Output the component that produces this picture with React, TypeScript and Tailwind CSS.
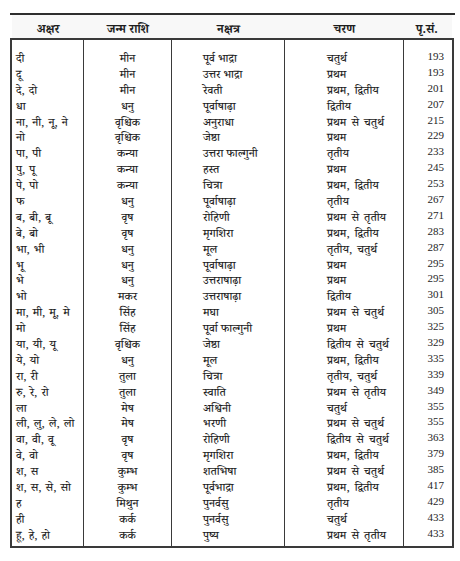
import React from "react";

type Row = [string, string, string, string, string];

const rows: Row[] = [
  ["दी", "मीन", "पूर्व भाद्रा", "चतुर्थ", "193"],
  ["दू", "मीन", "उत्तर भाद्रा", "प्रथम", "193"],
  ["दे, दो", "मीन", "रेवती", "प्रथम, द्वितीय", "201"],
  ["धा", "धनु", "पूर्वाषाढ़ा", "द्वितीय", "207"],
  ["ना, नी, नू, ने", "वृश्चिक", "अनुराधा", "प्रथम से चतुर्थ", "215"],
  ["नो", "वृश्चिक", "जेष्ठा", "प्रथम", "229"],
  ["पा, पी", "कन्या", "उत्तरा फाल्गुनी", "तृतीय", "233"],
  ["पु, पू", "कन्या", "हस्त", "प्रथम", "245"],
  ["पे, पो", "कन्या", "चित्रा", "प्रथम, द्वितीय", "253"],
  ["फ", "धनु", "पूर्वाषाढ़ा", "तृतीय", "267"],
  ["ब, बी, बू", "वृष", "रोहिणी", "प्रथम से तृतीय", "271"],
  ["बे, बो", "वृष", "मृगशिरा", "प्रथम, द्वितीय", "283"],
  ["भा, भी", "धनु", "मूल", "तृतीय, चतुर्थ", "287"],
  ["भू", "धनु", "पूर्वाषाढ़ा", "प्रथम", "295"],
  ["भे", "धनु", "उत्तराषाढ़ा", "प्रथम", "295"],
  ["भो", "मकर", "उत्तराषाढ़ा", "द्वितीय", "301"],
  ["मा, मी, मू, मे", "सिंह", "मघा", "प्रथम से चतुर्थ", "305"],
  ["मो", "सिंह", "पूर्वा फाल्गुनी", "प्रथम", "325"],
  ["या, यी, यू", "वृश्चिक", "जेष्ठा", "द्वितीय से चतुर्थ", "329"],
  ["ये, यो", "धनु", "मूल", "प्रथम, द्वितीय", "335"],
  ["रा, री", "तुला", "चित्रा", "तृतीय, चतुर्थ", "339"],
  ["रु, रे, रो", "तुला", "स्वाति", "प्रथम से तृतीय", "349"],
  ["ला", "मेष", "अश्विनी", "चतुर्थ", "355"],
  ["ली, लु, ले, लो", "मेष", "भरणी", "प्रथम से चतुर्थ", "355"],
  ["वा, वी, वू", "वृष", "रोहिणी", "द्वितीय से चतुर्थ", "363"],
  ["वे, वो", "वृष", "मृगशिरा", "प्रथम, द्वितीय", "379"],
  ["श, स", "कुम्भ", "शतभिषा", "प्रथम से चतुर्थ", "385"],
  ["श, स, से, सो", "कुम्भ", "पूर्वभाद्रा", "प्रथम, द्वितीय", "417"],
  ["ह", "मिथुन", "पुनर्वसु", "तृतीय", "429"],
  ["ही", "कर्क", "पुनर्वसु", "चतुर्थ", "433"],
  ["हू, हे, हो", "कर्क", "पुष्य", "प्रथम से तृतीय", "433"],
];

const font = {
  fontFamily:
    '"Noto Serif Devanagari", "Noto Sans Devanagari", "Lohit Devanagari", "FreeSerif", "Liberation Serif", serif',
};

function Cells({ items }: { items: string[] }) {
  return (
    <>
      {items.map((t, i) => (
        <div key={i} className="h-[15.9px] leading-[15.9px] whitespace-nowrap">
          {t}
        </div>
      ))}
    </>
  );
}

export default function App() {
  const col = (i: number) => rows.map((r) => r[i]);
  return (
    <div
      className="w-[460px] h-[561px] bg-white text-[#1e1e1e] overflow-hidden"
      style={font}
    >
      <div className="pt-[13px]">
        <div className="ml-[10px] w-[445px] h-[2px] bg-[#2e2e2e]" />
        <div className="ml-[12px] w-[440px] h-[23px] pt-[11px] flex items-center text-[12px] font-bold bg-[#f8f8f8]">
          <div className="w-[72px] text-center">अक्षर</div>
          <div className="w-[88px] text-center">जन्म राशि</div>
          <div className="w-[113px] text-center">नक्षत्र</div>
          <div className="w-[119px] text-center">चरण</div>
          <div className="flex-1 text-center pr-[2px]">पृ.सं.</div>
        </div>
        <div className="ml-[10px] w-[444px] h-[510px] border-2 border-[#3a3a3a] flex text-[11.5px] font-medium">
          <div className="w-[72px] border-r-[1.5px] border-[#3a3a3a] pt-[13px] pl-[4px] [word-spacing:1px]">
            <Cells items={col(0)} />
          </div>
          <div className="w-[88px] border-r-[1.5px] border-[#3a3a3a] pt-[13px] text-center">
            <Cells items={col(1)} />
          </div>
          <div className="w-[113px] border-r-[1.5px] border-[#3a3a3a] pt-[13px] pl-[31px]">
            <Cells items={col(2)} />
          </div>
          <div className="w-[119px] border-r-[1.5px] border-[#3a3a3a] pt-[13px] pl-[42px] [word-spacing:2px]">
            <Cells items={col(3)} />
          </div>
          <div
            className="flex-1 pt-[9px] pr-[8px] text-right text-[11px] font-normal"
            style={{ fontFamily: '"Liberation Serif", serif' }}
          >
            <Cells items={col(4)} />
          </div>
        </div>
      </div>
    </div>
  );
}
